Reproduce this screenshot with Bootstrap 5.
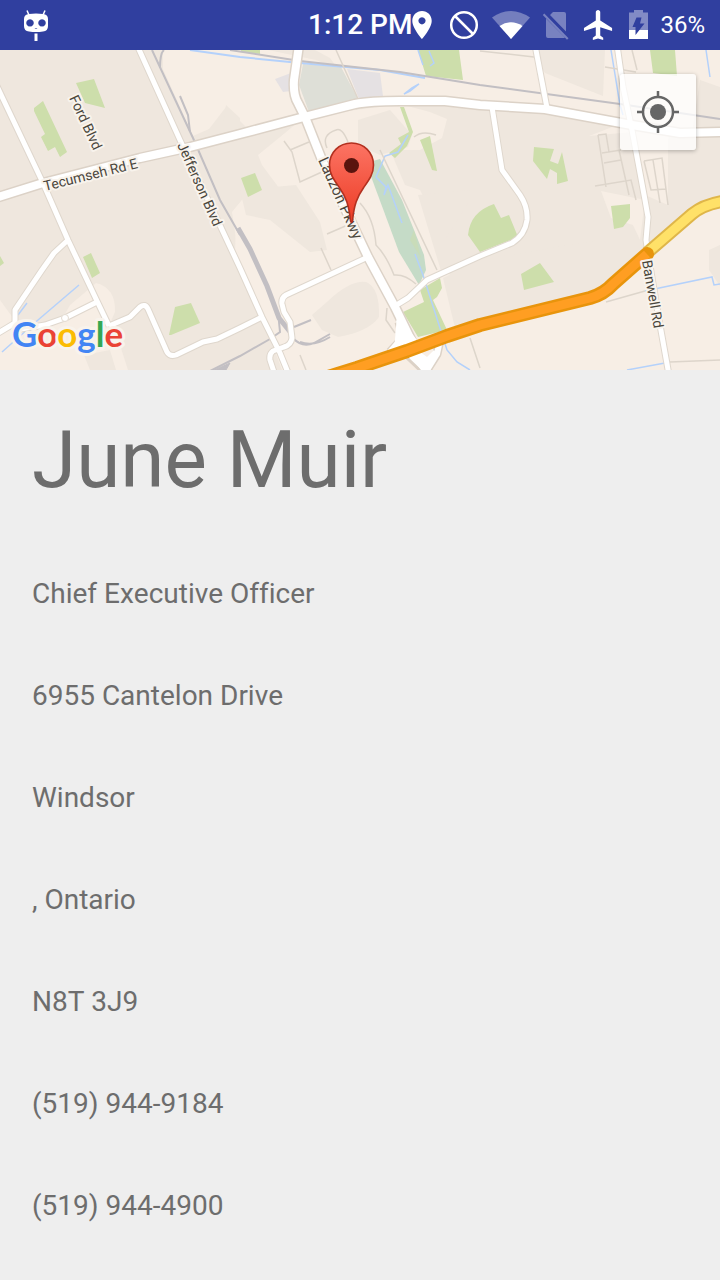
<!DOCTYPE html>
<html lang="en">
<head>
<meta charset="utf-8">
<meta name="viewport" content="width=device-width, initial-scale=1">
<title>June Muir</title>
<link href="https://cdn.jsdelivr.net/npm/bootstrap@5.3.0/dist/css/bootstrap.min.css" rel="stylesheet">
<style>
  body { background: #eee; color: #6d6d6d; font-family: Roboto, sans-serif; }
  .status-bar { background: #303f9f; height: 50px; padding: 0 15px 0 24px; }
  .status-icons { gap: 12px; }
  .clock { font-size: 28px; font-weight: 500; line-height: 54px; }
  .charge { font-size: 24px; line-height: 54px; }
  .map-view { height: 320px; }
  .map-label { font-family: Roboto, sans-serif; font-size: 14px; fill: #4a463c; stroke: #f8f3ec; stroke-width: 4px; stroke-linejoin: round; paint-order: stroke; }
  .map-label-lg { font-size: 15px; }
  .map-logo { font-family: Lato, sans-serif; font-size: 35px; font-weight: 700; stroke: #f8f3ec; stroke-width: 6px; stroke-linejoin: round; paint-order: stroke; }
  .locate-btn { top: 24px; right: 24px; width: 76px; height: 76px; background: rgba(255,255,255,.76); border-radius: 3px; box-shadow: 0 1px 4px rgba(0,0,0,.28); }
  .contact-name { font-size: 80px; font-weight: 400; line-height: 100px; padding: 40px 32px 32px; }
  .contact-list li { font-size: 28px; line-height: 40px; padding: 32px 32px 30px; font-kerning: none; font-variant-ligatures: none; }
</style>
</head>
<body>
<header class="status-bar d-flex align-items-center justify-content-between text-white">
  <svg width="24" height="50" fill="#fff" aria-hidden="true">
    <path d="M3 10.500L5 15M21 10.500L19 15" stroke="#fff" stroke-width="1.500"/>
    <path fill-rule="evenodd" d="M5 14Q12 13 19 14Q24 14.500 24 19V26Q24 31 19 31.500Q12 32.500 5 31.500Q0 31 0 26V19Q0 14.500 5 14ZM6 19.200a3.700 3.700 0 1 0 .01 0ZM18 19.200a3.700 3.700 0 1 0 .01 0ZM10.500 28Q12 29.500 13.500 28Z"/>
    <path d="M10.500 33.500h3V41h-3z"/>
  </svg>
  <div class="d-flex align-items-center">
    <span class="clock">1:12 PM</span>
    <div class="status-icons d-flex align-items-center">
      <svg width="24" height="50" fill="#fff" aria-hidden="true"><path fill-rule="evenodd" d="M10 11C4.500 11 .3 15.300 .3 20.700C.3 28 10 39 10 39S19.700 28 19.700 20.700C19.700 15.300 15.500 11 10 11ZM10 17.200a3.600 3.600 0 1 1 -.01 0Z"/></svg>
      <svg width="32" height="50" fill="none" stroke="#fff" stroke-width="2.500" aria-hidden="true"><circle cx="16" cy="25" r="12.800"/><path d="M7 16L25 34"/></svg>
      <svg width="38" height="50" fill="#fff" aria-hidden="true"><path opacity=".33" d="M0 17.500Q19 4.500 38 17.500L19 39Z"/><path d="M7.500 26Q19 18.500 30.500 26L19 39Z"/></svg>
      <svg width="28" height="50" fill="#fff" opacity=".35" aria-hidden="true"><path d="M11 12H22Q24 12 24 14V31.500L8 15ZM4 18.500L23 37.500Q22 38 21 38H6Q4 38 4 36Z"/><path d="M2.300 13.500L.8 15L25 39.800L26.500 38.300Z"/></svg>
      <svg width="32" height="50" fill="#fff" aria-hidden="true"><path transform="translate(-1 7) scale(1.480 1.500)" d="M21 16v-2l-8-5V3.500c0-.83-.67-1.500-1.500-1.500S10 2.670 10 3.500V9l-8 5v2l8-2.500V19l-2 1.500V22l3.500-1 3.500 1v-1.500L13 19v-5.500z"/></svg>
      <svg width="22" height="50" fill="#fff" aria-hidden="true"><path opacity=".4" d="M8 10h9v2.500h5V30H3V12.500h5z"/><path d="M3 30h19v9H3z"/><path fill="#303f9f" d="M10.500 17.500H15.500L14 23.500H18.500L9.500 35V27H6.500Z"/></svg>
      <span class="charge">36%</span>
    </div>
  </div>
</header>

<main>
  <section class="map-view position-relative overflow-hidden" aria-label="Map">
    <svg class="d-block w-100 h-100" viewBox="0 50 720 320" preserveAspectRatio="xMidYMid slice">
      <defs>
        <g id="main-roads">
          <path d="M-5 198L43 183L140 158L190 147L240 134L304 117L355 104Q370 101 400 101L445 101L480 105L545 109L632 125L680 133L725 132"/>
          <path d="M299 45L294 80Q293 95 298 103L305 117L322 160L368 257L395 307L413 344"/>
        </g>
        <g id="side-roads">
          <path d="M-5 82L43 183L68 240L97 301L109 326"/>
          <path d="M137 45L180 140L240 268L262 317L280 353L289 375"/>
          <path d="M535 45L547 108"/>
          <path d="M617 45L623 87L632 130L645 200L648 217L646 240L649 260L660 325L669 375"/>
          <path d="M492 107L502 170L520 195Q528 207 527 220Q525 235 512 243L480 256L427 280L408 298L395 306"/>
          <path d="M368 257L286 295Q281 298 282 304L284 312L290 322L292 338Q291 345 284 347L273 351Q269 354 270 360L275 375"/>
          <path d="M68 240L54 253L42 270L15 310L15 323L-5 335M15 330L45 325L65 318L97 302"/>
          <path d="M109 326L130 317L140 307Q145 303 148 309L167 352Q170 357 176 355L203 342L217 339L240 328L262 317"/>
        </g>
        <path id="highway" d="M315 381L357 368L407 351L447 336L480 325L590 298Q604 294 613 284L647 254"/>
        <path id="arterial" d="M647 253L692 214Q704 204 725 201"/>
        <linearGradient id="pin-red" x1="0" y1="0" x2="0" y2="1"><stop offset="0" stop-color="#fc7464"/><stop offset="1" stop-color="#ec3b24"/></linearGradient>
      </defs>

      <!-- land -->
      <path fill="#efe7de" d="M0 50h720v320H0z"/>
      <g fill="#f7eee5">
        <path d="M163 50H536L547 109L480 105L400 101L355 104L304 117L250 131L226 107L209 129L193 136L163 69Z"/>
        <path d="M480 50L533 56L545 73L603 96L605 50H720V87L700 80L692 132L632 126L480 105Z"/>
        <path d="M304 117L400 104L430 112L447 119L442 138L420 150L390 150L405 185L420 190L445 240L447 270L480 325L447 335L402 350L340 370H282L262 317L235 260L236 210L262 200L282 192L262 165L258 155L285 133Z"/>
        <path d="M232 212L250 190L285 210L300 235L315 260L300 260L300 300L270 315L240 265Z"/>
        <path d="M589 136L632 132L645 195L668 205V176L668 140L670 131L620 124ZM601 191L645 200L640 240L633 225L611 218Z"/>
        <path d="M340 370L480 325L596 299L647 255L690 214L720 206V370Z"/>
        <path d="M0 300L16 322L60 323L70 305L96 283Q116 288 115 312L108 328L120 345L128 370H0Z"/>
      </g>
      <g fill="#efe7de">
        <path d="M226 105L240 118V130L222 132ZM268 50L315 50L330 58L338 69L316 60Z"/>
        <path d="M312 315L327 302Q350 280 366 282Q380 288 379 317Q368 332 338 337L322 330Z"/>
        <path d="M240 190L296 185L320 222L327 250L310 252L270 220L246 215Z"/>
        <path d="M358 120L390 110L412 135L408 147L380 155L358 145Z"/>
        <path d="M709 250L720 245V286L709 270ZM240 275L262 318L240 327ZM84 355L110 350L116 370H90Z"/>
        <path d="M445 240L470 200L500 205L518 240L441 271L418 195L470 190Z"/>
        <path d="M443 278L480 260L600 240L640 258L600 293L480 322L455 328Z"/>
      </g>
      <path fill="#dedfd7" d="M303 64L341 67L358 99L309 112L299 85Z"/>
      <path fill="#e5e1e3" d="M347 69L380 73L383 96L359 99ZM275 79L291 73V91L283 92Z"/>
      <path fill="#c5dbc7" d="M366 163L380 159L402 200L424 255L426 270L419 285L399 252Z"/>

      <!-- parks -->
      <g fill="#cddeab">
        <path d="M76 83L94 79L105 108L85 103ZM34 108L43 101L67 152L60 157L55 147L48 151L41 137L45 134L34 111Z"/>
        <path d="M241 178L255 173L262 190L248 197Z"/>
        <path d="M418 50H459L463 80L426 76ZM241 50H260V54L241 52Z"/>
        <path d="M650 50L675 50L677 76L653 73ZM534 147L554 149L550 161L558 164L562 152L568 181L557 184L557 173L550 169L547 179L533 161Z"/>
        <path d="M420 140L430 136L437 171L432 170Z"/>
        <path d="M400 107L404 107L413 132L407 146L395 158L389 153L401 144L398 138L409 132Z"/>
        <path d="M468 235Q470 212 494 204L501 218L509 215L518 237L480 252Z"/>
        <path d="M521 274L540 263L554 282L524 290ZM611 206L630 204L630 218L623 227L614 229Z"/>
        <path d="M83 257L91 253L100 273L92 278ZM0 256L4 263L0 266Z"/>
        <path d="M169 335L175 307L191 303L200 323L171 335Z"/>
        <path d="M403 312L424 302L420 290L440 278L442 288L437 297L433 300L447 330L418 337Z"/>
        <path d="M414 230L421 258L410 240Z" opacity=".5"/>
      </g>

      <!-- water -->
      <g fill="none" stroke="#b4d1fb" stroke-width="1.500">
        <path d="M190 50L240 57L300 63L380 70L425 78" stroke-width="2"/>
        <path d="M418 50L423 65M429 51L434 63L430 66M611 50L620 105L623 115M706 50L710 77"/>
        <path d="M404 94L412 88L419 84L410 91Z" fill="#b4d1fb"/>
        <path d="M408 135L398 152L385 156L376 177L386 187L384 195L388 185L402 223M415 254L423 275L447 350L457 362L470 370" />
        <path d="M79 285L38 320L2 352M27 303L18 315M645 291L712 277L714 285L720 284M627 370L665 363"/>
      </g>

      <!-- railways and lanes -->
      <g fill="none" stroke="#c2bfc3">
        <path d="M152 50L193 138L220 200L240 235" stroke-width="2"/>
        <path d="M164 50Q160 53 160 68M180 96L188 115L190 132" stroke-width="2"/>
        <path d="M238 228L250 249L267 286L279 318L291 333" stroke-width="5"/>
        <path d="M278 312L280 332L270 339L240 356L208 372M293 338Q302 348 314 343L330 334M294 327L311 320M300 342Q314 347 330 337" stroke-width="2"/>
        <path d="M210 372L230 363L226 370Z" fill="#c2bfc3"/>
        <path d="M230 50L300 61L400 72L480 85L620 104L720 119" stroke-width="2"/>
      </g>
      <g fill="none" stroke="#ddd5cb" stroke-width="1.500">
        <path d="M336 50L358 99M480 51L534 57M284 141L292 152L300 182L324 171M290 150L309 142M327 148Q321 135 336 130Q342 127 348 142M414 137Q422 130 436 135"/>
        <path d="M360 203Q374 218 376 245Q386 255 394 275Q405 274 416 284M380 150L437 270M327 234L350 224M321 248L331 270M387 308L386 320L395 333M470 338L480 368M606 302L645 291M670 362L720 360"/>
        <path d="M598 135L606 134L609 152M598 135L606 187M602 153L621 150M604 163L621 160M595 186L631 180L636 200M619 150L629 195M644 161L662 158L668 205M644 161L651 190L666 189M653 160L660 203"/>
        <path d="M605 67L636 72M632 50L637 70M300 355L306 370"/>
      </g>

      <!-- roads: casing, then fill -->
      <g fill="none" stroke-linejoin="round">
        <use href="#side-roads" stroke="#dfd7cd" stroke-width="7"/>
        <use href="#main-roads" stroke="#dcd2c7" stroke-width="11"/>
        <path d="M399 322L403 338L390 352M440 340L437 354L427 370M405 352L424 370" stroke="#dcd2c7" stroke-width="9"/>
        <use href="#side-roads" stroke="#fff" stroke-width="5"/>
        <use href="#main-roads" stroke="#fff" stroke-width="8"/>
        <path d="M399 320L403 337L390 352M440 340L437 354L427 370M405 350L424 368" stroke="#fff" stroke-width="6"/>
        <path d="M397 315L417 340L415 348L394 352Z" fill="#fff"/>
        <path d="M408 352L416 349L427 357L434 350L438 356L430 370H421Z" fill="#fff"/>
        <use href="#arterial" stroke="#dfb64a" stroke-width="13"/>
        <use href="#arterial" stroke="#ffe168" stroke-width="9"/>
        <use href="#highway" stroke="#e8940c" stroke-width="14" stroke-linecap="round"/>
        <use href="#highway" stroke="#ff9e22" stroke-width="9"/>
        <circle cx="65" cy="318" r="3.500" fill="#fff" stroke="#e4dcd2"/>
      </g>

      <!-- street names -->
      <text class="map-label" transform="translate(45 191) rotate(-14)">Tecumseh Rd E</text>
      <text class="map-label" transform="translate(69 98) rotate(65)">Ford Blvd</text>
      <text class="map-label" transform="translate(177 145) rotate(66)">Jefferson Blvd</text>
      <text class="map-label map-label-lg" transform="translate(318 160) rotate(66)">Lauzon Pkwy</text>
      <text class="map-label" transform="translate(642 261) rotate(80)">Banwell Rd</text>

      <!-- marker -->
      <path fill="url(#pin-red)" stroke="#b2301f" stroke-width="1.600" d="M351.500 143C339 143 329.500 152.500 329.500 165C329.500 174 334 180 339 187C346 197 349 205 350.500 221Q351.500 224 352.500 221C354 205 357 197 364 187C369 180 373.500 174 373.500 165C373.500 152.500 364 143 351.500 143Z"/>
      <circle cx="351.500" cy="165.500" r="7.500" fill="#5a140e"/>

      <text class="map-logo" x="12" y="347"><tspan fill="#4285f4">G</tspan><tspan fill="#ea4335">o</tspan><tspan fill="#fbbc05">o</tspan><tspan fill="#4285f4">g</tspan><tspan fill="#34a853">l</tspan><tspan fill="#ea4335">e</tspan></text>
    </svg>
    <button type="button" class="locate-btn btn position-absolute d-flex align-items-center justify-content-center p-0 border-0" aria-label="My location">
      <svg width="44" height="44" fill="none" stroke="#666" aria-hidden="true"><circle cx="22" cy="22" r="15" stroke-width="2.500"/><circle cx="22" cy="22" r="8" fill="#666" stroke="none"/><path stroke-width="2.500" d="M22 1v6M22 37v6M1 22h6M37 22h6"/></svg>
    </button>
  </section>

  <section>
    <h1 class="contact-name m-0">June Muir</h1>
    <ul class="contact-list list-unstyled m-0">
      <li>Chief Executive Officer</li>
      <li>6955 Cantelon Drive</li>
      <li>Windsor</li>
      <li>, Ontario</li>
      <li>N8T 3J9</li>
      <li><a class="text-reset text-decoration-none" href="tel:+15199449184">(519) 944-9184</a></li>
      <li><a class="text-reset text-decoration-none" href="tel:+15199444900">(519) 944-4900</a></li>
    </ul>
  </section>
</main>
<script src="https://cdn.jsdelivr.net/npm/bootstrap@5.3.0/dist/js/bootstrap.bundle.min.js"></script>
</body>
</html>
